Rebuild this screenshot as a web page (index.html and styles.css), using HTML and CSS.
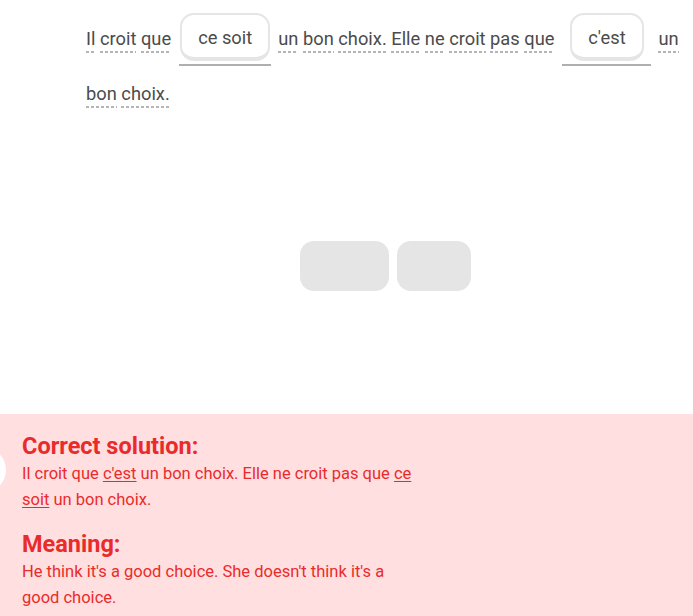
FILE: index.html
```html
<!DOCTYPE html>
<html lang="fr">
<head>
<meta charset="utf-8">
<link rel="stylesheet" href="styles.css">
</head>
<body>
<main class="challenge">
  <p class="sentence"><span class="w">Il</span> <span class="w">croit</span> <span class="w">que</span><span class="slot"><span class="chip">ce soit</span></span><span class="w">un</span> <span class="w">bon</span> <span class="w">choix.</span> <span class="w">Elle</span> <span class="w">ne</span> <span class="w">croit</span> <span class="w">pas</span> <span class="w">que</span><span class="slot"><span class="chip">c'est</span></span><span class="w">un</span> <span class="w">bon</span> <span class="w">choix.</span></p>
  <div class="bank">
    <span class="ghost ghost-a"></span>
    <span class="ghost ghost-b"></span>
  </div>
</main>
<section class="feedback">
  <span class="dot"></span>
  <h2 class="fb-title">Correct solution:</h2>
  <p class="fb-text">Il croit que <u>c'est</u> un bon choix. Elle ne croit pas que <u>ce soit</u> un bon choix.</p>
  <h2 class="fb-title fb-gap">Meaning:</h2>
  <p class="fb-text">He think it's a good choice. She doesn't think it's a good choice.</p>
</section>
</body>
</html>
```
FILE: styles.css
```css
* { box-sizing: border-box; }
html, body { margin: 0; padding: 0; background: #fff; }
body {
  width: 693px;
  height: 616px;
  overflow: hidden;
  font-family: Roboto, "Liberation Sans", sans-serif;
  display: flex;
  flex-direction: column;
}
.challenge {
  height: 414px;
  padding: 12px 9px 0 86px;
  display: flex;
  flex-direction: column;
}
.sentence {
  margin: 0;
  font-size: 18.3px;
  line-height: 53px;
  color: #4b4b4b;
}
.w {
  padding-bottom: 4px;
  background-image: linear-gradient(to right, #b5b5b5 60%, transparent 60%);
  background-size: 5px 2px;
  background-repeat: repeat-x;
  background-position: 0 100%;
}
.slot {
  display: inline-flex;
  justify-content: center;
  vertical-align: middle;
  min-width: 89px;
  margin: 0 7px 0 8px;
  padding: 0 1px 3px;
  border-bottom: 2px solid #afafaf;
  line-height: 1;
  position: relative;
  top: -1px;
}
.chip {
  display: inline-flex;
  align-items: center;
  height: 48px;
  padding: 5px 16px 0;
  border: 2px solid #e5e5e5;
  border-bottom-width: 4px;
  border-radius: 14px;
  background: #fff;
  color: #4b4b4b;
  font-size: 18.3px;
}
.bank {
  margin-top: 121px;
  display: flex;
  justify-content: center;
  gap: 8px;
}
.ghost {
  height: 50px;
  border-radius: 14px;
  background: #e5e5e5;
}
.ghost-a { width: 89px; }
.ghost-b { width: 74px; }
.feedback {
  position: relative;
  flex: 1;
  background: #ffdfe0;
  color: #ea2b2b;
  padding: 18px 0 0 22px;
}
.dot {
  position: absolute;
  left: -40px;
  top: 33px;
  width: 46px;
  height: 46px;
  border-radius: 50%;
  background: #fff;
}
.fb-title {
  margin: 0;
  font-size: 23.5px;
  line-height: 28px;
  font-weight: 700;
}
.fb-gap { margin-top: 17px; }
.fb-text {
  margin: 1px 0 0;
  width: 392px;
  font-size: 16.5px;
  line-height: 26px;
}
.fb-text u { text-underline-offset: 2px; }
```
